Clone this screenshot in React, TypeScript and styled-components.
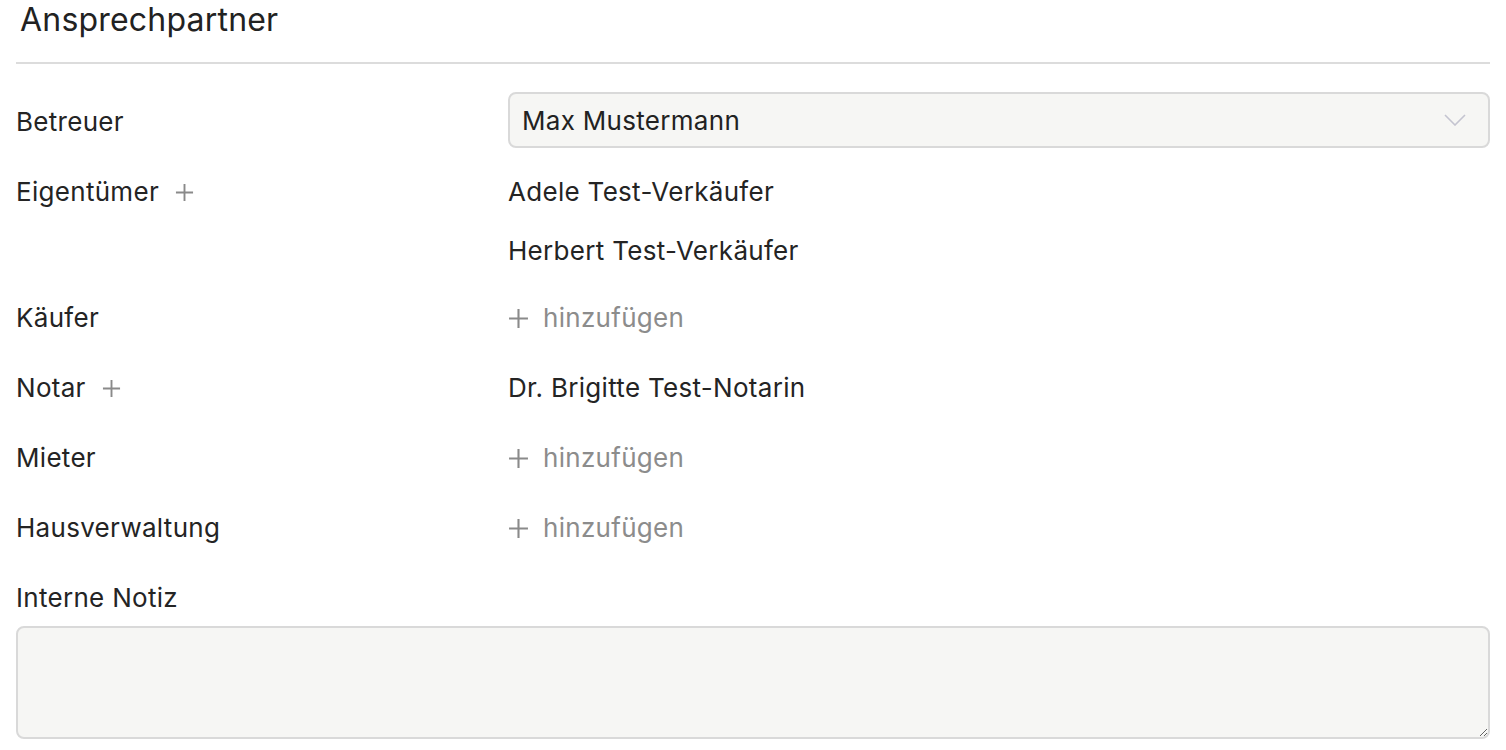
import React from "react";
import styled, { createGlobalStyle } from "styled-components";

const GlobalStyle = createGlobalStyle`
  html, body { margin: 0; padding: 0; background: #ffffff; }
  body {
    font-family: Inter, "Noto Sans", "Liberation Sans", sans-serif;
    color: #242424;
    -webkit-font-smoothing: antialiased;
  }
  * { box-sizing: border-box; }
`;

const Page = styled.div`
  padding: 0 16px;
  letter-spacing: 0.3px;
`;

const Header = styled.div`
  padding: 0 4px 22px;
  border-bottom: 2px solid #dcdcdc;
`;

const Title = styled.h2`
  margin: 0;
  font-size: 32px;
  line-height: 40px;
  font-weight: 400;
  letter-spacing: 0.2px;
  color: #222222;
`;

const Row = styled.div<{ $pad?: string }>`
  display: grid;
  grid-template-columns: 492px 1fr;
  align-items: start;
  padding: ${(p) => p.$pad ?? "15px 0"};
`;

const Label = styled.div<{ $offset?: number }>`
  display: flex;
  align-items: center;
  gap: 16px;
  font-size: 26px;
  line-height: 40px;
  margin-top: ${(p) => p.$offset ?? 0}px;
`;

const Values = styled.div`
  display: flex;
  flex-direction: column;
  gap: 19px;
`;

const Value = styled.div`
  font-size: 26px;
  line-height: 40px;
`;

const AddLink = styled.div`
  display: flex;
  align-items: center;
  gap: 14px;
  font-size: 26px;
  line-height: 40px;
  color: #8c8c8c;
`;

const SelectBox = styled.div`
  height: 56px;
  display: flex;
  align-items: center;
  justify-content: space-between;
  padding: 0 22px 0 12px;
  background: #f6f6f4;
  border: 2px solid #d9d9d9;
  border-radius: 8px;
  font-size: 26px;
  color: #222222;
`;

const NoteSection = styled.div`
  padding: 15px 0 0;
  display: flex;
  flex-direction: column;
  gap: 8px;
`;

const NoteArea = styled.textarea`
  display: block;
  width: 100%;
  height: 113px;
  background: #f6f6f4;
  border: 2px solid #d9d9d9;
  border-radius: 8px;
  font-family: inherit;
  font-size: 26px;
  padding: 10px 12px;
  resize: vertical;
  outline: none;
`;

const PlusIcon = ({ size = 19 }: { size?: number }) => (
  <svg width={size} height={size} viewBox="0 0 20 20" fill="none">
    <path d="M10 1V19M1 10H19" stroke="#8a8a8a" strokeWidth="2" />
  </svg>
);

const Chevron = () => (
  <svg width="22" height="12" viewBox="0 0 22 12" fill="none">
    <path d="M1 1L11 11L21 1" stroke="#c4c4d0" strokeWidth="1.6" />
  </svg>
);

const Add = () => (
  <AddLink>
    <PlusIcon size={21} />
    hinzufügen
  </AddLink>
);

export default function App() {
  return (
    <>
      <GlobalStyle />
      <Page>
        <Header>
          <Title>Ansprechpartner</Title>
        </Header>
        <Row $pad="28px 0 9px">
          <Label $offset={10}>Betreuer</Label>
          <SelectBox>
            <span>Max Mustermann</span>
            <Chevron />
          </SelectBox>
        </Row>
        <Row $pad="15px 0 12px">
          <Label>
            Eigentümer <PlusIcon />
          </Label>
          <Values>
            <Value>Adele Test-Verkäufer</Value>
            <Value>Herbert Test-Verkäufer</Value>
          </Values>
        </Row>
        <Row>
          <Label>Käufer</Label>
          <Add />
        </Row>
        <Row>
          <Label>
            Notar <PlusIcon />
          </Label>
          <Value>Dr. Brigitte Test-Notarin</Value>
        </Row>
        <Row>
          <Label>Mieter</Label>
          <Add />
        </Row>
        <Row>
          <Label>Hausverwaltung</Label>
          <Add />
        </Row>
        <NoteSection>
          <Label>Interne Notiz</Label>
          <NoteArea />
        </NoteSection>
      </Page>
    </>
  );
}
